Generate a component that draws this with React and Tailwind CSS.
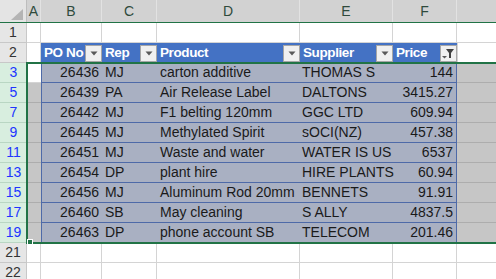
import React from 'react';

const rows = [
  { n: 3, po: 26436, rep: 'MJ', product: 'carton additive', supplier: 'THOMAS S', price: '144' },
  { n: 5, po: 26439, rep: 'PA', product: 'Air Release Label', supplier: 'DALTONS', price: '3415.27' },
  { n: 7, po: 26442, rep: 'MJ', product: 'F1 belting 120mm', supplier: 'GGC LTD', price: '609.94' },
  { n: 9, po: 26445, rep: 'MJ', product: 'Methylated Spirit', supplier: 'sOCI(NZ)', price: '457.38' },
  { n: 11, po: 26451, rep: 'MJ', product: 'Waste and water', supplier: 'WATER IS US', price: '6537' },
  { n: 13, po: 26454, rep: 'DP', product: 'plant hire', supplier: 'HIRE PLANTS', price: '60.94' },
  { n: 15, po: 26456, rep: 'MJ', product: 'Aluminum Rod 20mm', supplier: 'BENNETS', price: '91.91' },
  { n: 17, po: 26460, rep: 'SB', product: 'May cleaning', supplier: 'S ALLY', price: '4837.5' },
  { n: 19, po: 26463, rep: 'DP', product: 'phone account SB', supplier: 'TELECOM', price: '201.46' },
];

const DropButton = () => (
  <div className="w-[17px] h-[17px] shrink-0 border border-[#a6a6a6] bg-[#f0f0f0] flex items-center justify-center">
    <svg width="8" height="5" viewBox="0 0 8 5">
      <polygon points="0.5,0.5 7.5,0.5 4,4.5" fill="#595959" />
    </svg>
  </div>
);

const FilterButton = () => (
  <div className="w-[17px] h-[17px] shrink-0 border border-[#a6a6a6] bg-[#f0f0f0] relative">
    <svg width="15" height="15" viewBox="0 0 15 15" className="absolute left-0 top-0">
      <polygon points="5,3 13,3 10,7 10,12 8,12 8,7" fill="#404040" />
      <polygon points="1,10 6,10 3.5,12.5" fill="#595959" />
    </svg>
  </div>
);

const HeaderCell = ({ w, label, filter }) => (
  <div className={`${w} h-full flex items-end justify-between pl-[3px]`}>
    <span className="font-bold text-white text-[13.5px] leading-[19px] whitespace-nowrap tracking-[-0.4px]">{label}</span>
    {filter ? <FilterButton /> : <DropButton />}
  </div>
);

export default function App() {
  return (
    <div
      className="relative w-[496px] h-[279px] overflow-hidden bg-white text-[14px] text-[#1a1a1a]"
      style={{ fontFamily: '"Liberation Sans", Arial, sans-serif' }}
    >
      {/* column headers */}
      <div className="flex h-[23px] bg-[#d2d2d2] border-b border-[#217346] text-[#2f4a3c]">
        <div className="w-[27px] h-full relative border-r border-[#bdbdbd] bg-[#e4e4e4]">
          <svg width="13" height="12" viewBox="0 0 13 12" className="absolute left-[11px] top-[9px]">
            <polygon points="12,0 12,11 0,11" fill="#b4b4b4" />
          </svg>
        </div>
        <div className="w-[14px] h-full flex items-center justify-center border-r border-[#e2e2e2]">A</div>
        <div className="w-[61px] h-full flex items-center justify-center border-r border-[#e2e2e2]">B</div>
        <div className="w-[55px] h-full flex items-center justify-center border-r border-[#e2e2e2]">C</div>
        <div className="w-[143px] h-full flex items-center justify-center border-r border-[#e2e2e2]">D</div>
        <div className="w-[93px] h-full flex items-center justify-center border-r border-[#e2e2e2]">E</div>
        <div className="w-[64px] h-full flex items-center justify-center border-r border-[#e2e2e2]">F</div>
        <div className="flex-1 h-full" />
      </div>

      {/* row 1 */}
      <div className="flex h-[20px]">
        <div className="w-[27px] h-full flex items-center justify-center bg-[#e6e6e6] border-r border-b border-[#c8c8c8] text-[#333]">1</div>
        <div className="w-[14px] h-full border-r border-b border-[#d4d4d4]" />
        <div className="w-[61px] h-full border-r border-b border-[#d4d4d4]" />
        <div className="w-[55px] h-full border-r border-b border-[#d4d4d4]" />
        <div className="w-[143px] h-full border-r border-b border-[#d4d4d4]" />
        <div className="w-[93px] h-full border-r border-b border-[#d4d4d4]" />
        <div className="w-[64px] h-full border-r border-b border-[#d4d4d4]" />
        <div className="flex-1 h-full border-b border-[#d4d4d4]" />
      </div>

      {/* row 2: table header */}
      <div className="flex h-[20px]">
        <div className="w-[27px] h-full flex items-center justify-center bg-[#e6e6e6] border-r border-b border-[#c8c8c8] text-[#333]">2</div>
        <div className="w-[14px] h-full border-r border-b border-[#d4d4d4]" />
        <div className="flex h-[19px] bg-[#4472c4]">
          <HeaderCell w="w-[61px]" label="PO No" />
          <HeaderCell w="w-[55px]" label="Rep" />
          <HeaderCell w="w-[143px]" label="Product" />
          <HeaderCell w="w-[93px]" label="Supplier" />
          <HeaderCell w="w-[64px]" label="Price" filter />
        </div>
        <div className="flex-1 h-full border-l border-b border-[#d4d4d4]" />
      </div>

      {/* filtered data rows */}
      {rows.map((r, i) => (
        <div key={r.n} className="flex h-[20px]">
          <div className="w-[27px] h-full flex items-center justify-center bg-[#d8eedf] border-b border-[#b9d6c3] text-[#2035ff]">
            {r.n}
          </div>
          <div className={`w-[14px] h-full border-b ${i === 0 ? 'bg-white border-[#d4d4d4]' : 'bg-[#c6c6c6] border-[#adadad]'}`} />
          <div className="flex h-full bg-[#a9b0c2] border-l border-r border-b border-[#4e6aa8]">
            <div className="w-[60px] h-full flex items-center justify-end pr-[3px]">{r.po}</div>
            <div className="w-[55px] h-full flex items-center pl-[3px]">{r.rep}</div>
            <div className="w-[143px] h-full flex items-center pl-[3px] whitespace-nowrap">{r.product}</div>
            <div className="w-[93px] h-full flex items-center pl-[2px] whitespace-nowrap">{r.supplier}</div>
            <div className="w-[63px] h-full flex items-center justify-end pr-[3px]">{r.price}</div>
          </div>
          <div className="flex-1 h-full bg-[#c6c6c6] border-b border-[#adadad]" />
        </div>
      ))}

      {/* rows 21, 22 */}
      {[21, 22].map((n) => (
        <div key={n} className="flex h-[20px]">
          <div className="w-[27px] h-full flex items-center justify-center bg-[#e6e6e6] border-r border-b border-[#c8c8c8] text-[#333]">{n}</div>
          <div className="w-[14px] h-full border-r border-b border-[#d4d4d4]" />
          <div className="w-[61px] h-full border-r border-b border-[#d4d4d4]" />
          <div className="w-[55px] h-full border-r border-b border-[#d4d4d4]" />
          <div className="w-[143px] h-full border-r border-b border-[#d4d4d4]" />
          <div className="w-[93px] h-full border-r border-b border-[#d4d4d4]" />
          <div className="w-[64px] h-full border-r border-b border-[#d4d4d4]" />
          <div className="flex-1 h-full border-b border-[#d4d4d4]" />
        </div>
      ))}

      {/* selection outline */}
      <div className="absolute left-[26px] top-[62px] w-[480px] h-[182px] border-2 border-[#217346] pointer-events-none" />
      <div className="absolute left-[27px] top-[239px] w-[6px] h-[6px] bg-[#217346] border border-white" />
    </div>
  );
}
